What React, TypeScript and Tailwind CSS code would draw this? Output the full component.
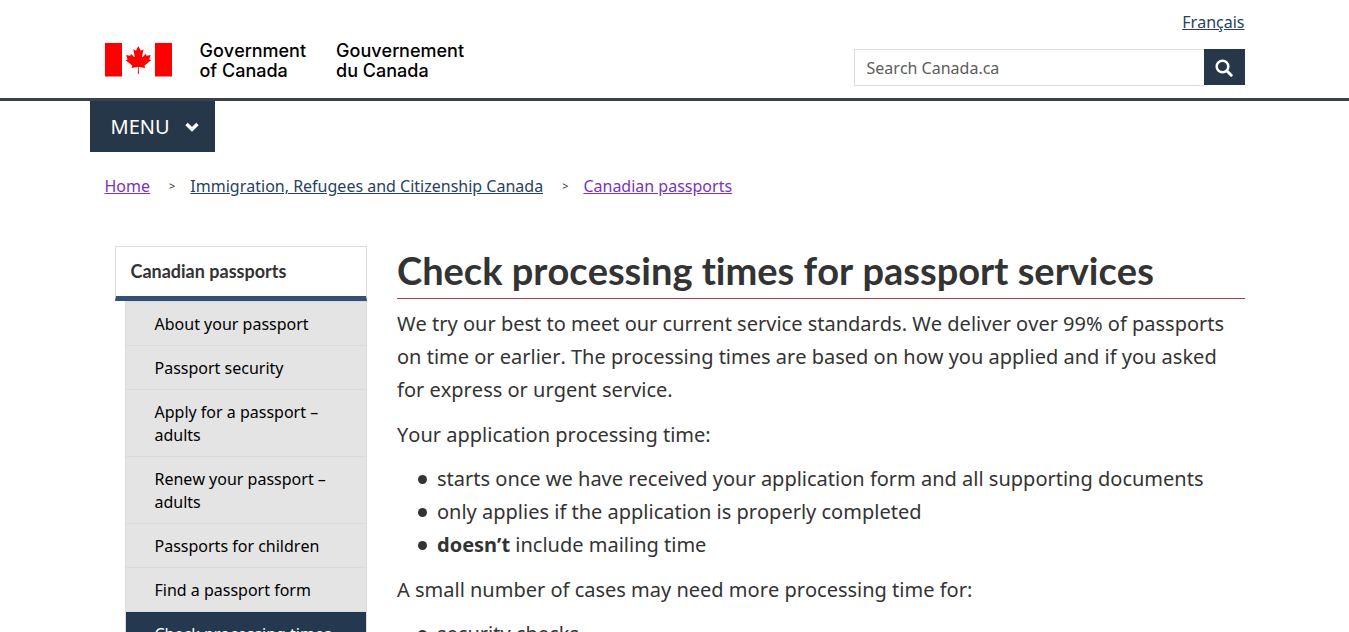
import React from "react";

const crumbs = [
  { label: "Home", visited: true },
  { label: "Immigration, Refugees and Citizenship Canada", visited: false },
  { label: "Canadian passports", visited: true },
];

const sections = [
  { label: "About your passport" },
  { label: "Passport security" },
  { label: "Apply for a passport – adults" },
  { label: "Renew your passport – adults" },
  { label: "Passports for children" },
  { label: "Find a passport form" },
  { label: "Check processing times", current: true },
];

function Flag() {
  return (
    <svg width="67" height="34" viewBox="0 0 67 34" fill="#ff0000" aria-hidden="true">
      <rect x="0" y="0" width="17" height="33.5" />
      <rect x="50" y="0" width="17" height="33.5" />
      <path
        transform="translate(33.4 16.7) scale(0.0068 0.0069)"
        d="m-90 2030 45-863a95 95 0 0 0-111-98l-859 151 116-320a65 65 0 0 0-20-73l-941-762 212-99a65 65 0 0 0 34-79l-186-572 542 115a65 65 0 0 0 73-38l105-247 423 454a65 65 0 0 0 111-57l-204-1052 327 189a65 65 0 0 0 91-27l332-652 332 652a65 65 0 0 0 91 27l327-189-204 1052a65 65 0 0 0 111 57l423-454 105 247a65 65 0 0 0 73 38l542-115-186 572a65 65 0 0 0 34 79l212 99-941 762a65 65 0 0 0-20 73l116 320-859-151a95 95 0 0 0-111 98l45 863z"
      />
    </svg>
  );
}

function Header() {
  return (
    <header className="border-b-[3px] border-[#38414d]">
      <div className="mx-auto flex max-w-[1170px] justify-between px-[15px] pb-3">
        <a href="#home" className="flex items-start pt-[41px] text-black">
          <span className="pt-0.5">
            <Flag />
          </span>
          <span className="ml-7 flex gap-[30px] font-[Inter,sans-serif] text-[18px] leading-5 font-medium">
            <span>
              Government
              <br />
              of Canada
            </span>
            <span>
              Gouvernement
              <br />
              du Canada
            </span>
          </span>
        </a>
        <div className="flex flex-col items-end pt-2.5">
          <a href="#fr" className="leading-6 text-[#284162] underline">
            Français
          </a>
          <form className="mt-[15px] flex items-start" role="search">
            <label htmlFor="search" className="sr-only">
              Search Canada.ca
            </label>
            <input
              id="search"
              type="search"
              placeholder="Search Canada.ca"
              className="h-[37px] w-[350px] border border-r-0 border-[#dcdee1] bg-white px-3 text-base text-[#555] outline-none placeholder:text-[#5c5c5c]"
            />
            <button
              type="submit"
              aria-label="Search"
              className="flex h-9 w-[41px] items-center justify-center bg-[#26374a] pt-0.5 text-white"
            >
              <svg width="18" height="18" viewBox="0 0 18 18" fill="none" stroke="currentColor" aria-hidden="true">
                <circle cx="7.5" cy="7.5" r="5.8" strokeWidth="2.5" />
                <path d="M11.8 11.8 16.2 16.2" strokeWidth="3" strokeLinecap="round" />
              </svg>
            </button>
          </form>
        </div>
      </div>
    </header>
  );
}

function Breadcrumbs() {
  return (
    <nav aria-label="Breadcrumbs" className="px-[15px] pt-[22px]">
      <ol className="flex flex-wrap leading-6">
        {crumbs.map((c, i) => (
          <li key={c.label} className="flex items-center">
            {i > 0 && <span className="mr-[15px] ml-[19px] text-[11px] text-[#333]">&gt;</span>}
            <a
              href="#crumb"
              className={c.visited ? "text-[#7834bc] underline" : "text-[#284162] underline"}
            >
              {c.label}
            </a>
          </li>
        ))}
      </ol>
    </nav>
  );
}

function Sidebar() {
  return (
    <nav aria-label="Canadian passports" className="w-1/4 pr-[15px] pl-[25px]">
      <h2 className="border border-b-[5px] border-[#dcdee1] border-b-[#335075] px-[15px] py-3 font-[Lato,sans-serif] text-[18px] leading-[25px] font-bold">
        <a href="#passports">Canadian passports</a>
      </h2>
      <ul className="ml-2.5 border border-b-0 border-[#dbdbdb] bg-[#e4e4e4] text-black">
        {sections.map((s) => (
          <li key={s.label} className="border-b border-[#dbdbdb]">
            <a
              href="#section"
              aria-current={s.current ? "page" : undefined}
              className={
                s.current
                  ? "block bg-[#243850] pt-[11px] pr-5 pb-[9px] pl-[29px] leading-[23px] text-white"
                  : "block pt-[11px] pr-5 pb-[9px] pl-[29px] leading-[23px]"
              }
            >
              {s.label}
            </a>
          </li>
        ))}
      </ul>
    </nav>
  );
}

function Bullet({ children }: { children: React.ReactNode }) {
  return (
    <li className="before:mr-2.5 before:-ml-[19px] before:inline-block before:size-[9px] before:rounded-full before:bg-[#333] before:align-[2px] before:content-['']">
      {children}
    </li>
  );
}

function Article() {
  return (
    <main className="w-3/4 px-[15px] text-[20px] leading-[33px]">
      <h1 className="mb-2 border-b border-[#af3c43] pt-0.5 pb-[5px] font-[Lato,sans-serif] text-[38px] leading-[45px] font-bold">
        Check processing times for passport services
      </h1>
      <p className="mb-3">
        We try our best to meet our current service standards. We deliver over 99% of passports on
        time or earlier. The processing times are based on how you applied and if you asked for
        express or urgent service.
      </p>
      <p className="mb-[11px]">Your application processing time:</p>
      <ul className="mb-3 pl-10">
        <Bullet>starts once we have received your application form and all supporting documents</Bullet>
        <Bullet>only applies if the application is properly completed</Bullet>
        <Bullet>
          <strong>doesn’t</strong> include mailing time
        </Bullet>
      </ul>
      <p className="mb-[11px]">A small number of cases may need more processing time for:</p>
      <ul className="mb-3 pl-10">
        <Bullet>security checks</Bullet>
      </ul>
    </main>
  );
}

export default function App() {
  return (
    <div className="bg-white font-['Noto_Sans',sans-serif] text-base text-[#333] [font-kerning:none] [text-rendering:optimizeSpeed]">
      <Header />
      <div className="mx-auto max-w-[1170px]">
        <button
          type="button"
          className="flex h-[51px] w-[125px] items-center gap-[15px] bg-[#26374a] pl-[21px] text-[20px] text-white"
        >
          MENU
          <svg width="14" height="10" viewBox="0 0 14 10" fill="none" stroke="currentColor" strokeWidth="3.4" aria-hidden="true">
            <path d="M1.5 2 7 7.3 12.5 2" />
          </svg>
        </button>
        <Breadcrumbs />
        <div className="mt-12 flex items-start">
          <Sidebar />
          <Article />
        </div>
      </div>
    </div>
  );
}
